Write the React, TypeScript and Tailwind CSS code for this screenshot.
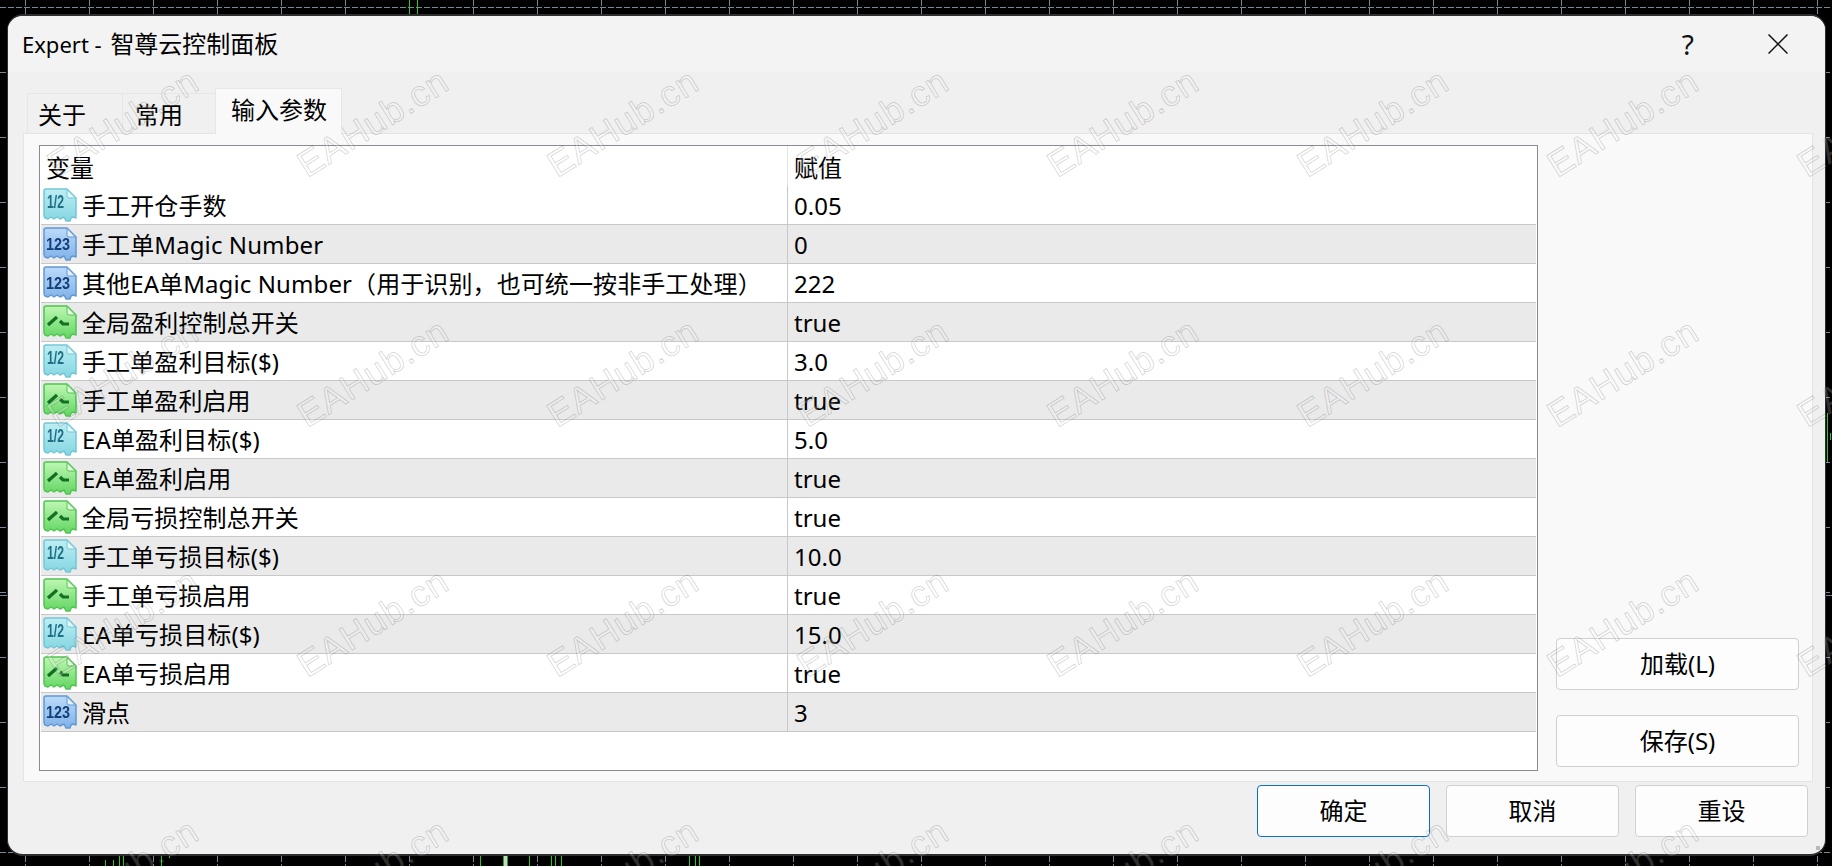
import React from "react";

type Kind = "frac" | "int" | "bool";
const rows: { kind: Kind; name: string; value: string }[] = [
  { kind: "frac", name: "手工开仓手数", value: "0.05" },
  { kind: "int", name: "手工单Magic Number", value: "0" },
  { kind: "int", name: "其他EA单Magic Number（用于识别，也可统一按非手工处理）", value: "222" },
  { kind: "bool", name: "全局盈利控制总开关", value: "true" },
  { kind: "frac", name: "手工单盈利目标($)", value: "3.0" },
  { kind: "bool", name: "手工单盈利启用", value: "true" },
  { kind: "frac", name: "EA单盈利目标($)", value: "5.0" },
  { kind: "bool", name: "EA单盈利启用", value: "true" },
  { kind: "bool", name: "全局亏损控制总开关", value: "true" },
  { kind: "frac", name: "手工单亏损目标($)", value: "10.0" },
  { kind: "bool", name: "手工单亏损启用", value: "true" },
  { kind: "frac", name: "EA单亏损目标($)", value: "15.0" },
  { kind: "bool", name: "EA单亏损启用", value: "true" },
  { kind: "int", name: "滑点", value: "3" },
];

const palette = {
  frac: { top: "#bdeef3", bottom: "#84d6e2", edge: "#74c6d6", ear: "#e4f8fa", ink: "#1f6f88" },
  int: { top: "#bcdafa", bottom: "#7fb2e8", edge: "#6198d4", ear: "#e4f0fc", ink: "#123f78" },
  bool: { top: "#bff7b4", bottom: "#62d662", edge: "#52c452", ear: "#e4fce0", ink: "#136f22" },
};

function ParamIcon({ kind }: { kind: Kind }) {
  const c = palette[kind];
  const id = `grad-${kind}`;
  return (
    <svg width="34" height="34" viewBox="0 0 34 34" className="shrink-0 blur-[0.35px]">
      <defs>
        <linearGradient id={id} x1="0" y1="0" x2="0" y2="1">
          <stop offset="0" stopColor={c.top} />
          <stop offset="1" stopColor={c.bottom} />
        </linearGradient>
      </defs>
      <path
        d="M3 1H24L33 10V30L30 29L28 30L27 33L23 33L21 29L17 31L14 29L11 31L8 29L5 31L2 30Q1 29 1 27V3Q1 1 3 1Z"
        fill={`url(#${id})`}
        stroke={c.edge}
        strokeWidth="1.5"
        strokeLinejoin="round"
      />
      <path d="M24 1.5L32.5 10H26Q24 10 24 8Z" fill={c.ear} stroke={c.edge} strokeWidth="1" />
      {kind === "frac" && (
        <text x="4" y="20" fill={c.ink} fontFamily="'Liberation Sans', sans-serif" fontWeight="700" fontSize="18" textLength="17" lengthAdjust="spacingAndGlyphs">
          1/2
        </text>
      )}
      {kind === "int" && (
        <text x="3" y="23" fill={c.ink} fontFamily="'Liberation Sans', sans-serif" fontWeight="700" fontSize="16" textLength="24" lengthAdjust="spacingAndGlyphs">
          123
        </text>
      )}
      {kind === "bool" && (
        <g stroke={c.ink} strokeWidth="3.2" fill="none">
          <path d="M5 20L14 12" />
          <path d="M17 16L20 19H26" />
        </g>
      )}
    </svg>
  );
}

const vLines = Array.from({ length: 29 }, (_, i) => 25.5 + i * 64);
const hLines = Array.from({ length: 14 }, (_, i) => 7.5 + i * 65);
const greenTop = [409.5, 417.5];
const greenBottom = [119.5, 123.5, 161.5, 480.5, 529.5, 551.5, 555.5, 561.5, 689.5, 695.5, 699.5];

function Chart() {
  return (
    <svg width="1832" height="866" className="absolute left-0 top-0">
      {hLines.map((y) => (
        <line key={y} x1="0" x2="1832" y1={y} y2={y} stroke="#778899" strokeDasharray="6 2" />
      ))}
      {vLines.map((x) => (
        <line key={x} x1={x} x2={x} y1="0" y2="866" stroke="#778899" strokeDasharray="6 2" />
      ))}
      <line x1="0" x2="1832" y1="595.5" y2="595.5" stroke="#778899" />
      {greenTop.map((x) => (
        <line key={x} x1={x} x2={x} y1="0" y2="15" stroke="#22cc22" />
      ))}
      {greenBottom.map((x) => (
        <line key={x} x1={x} x2={x} y1="855" y2="866" stroke="#22cc22" />
      ))}
      <rect x="503" y="855" width="5" height="11" fill="#22aa22" />
      <rect x="504" y="855" width="3" height="11" fill="#cfcfcf" />
      <line x1="105.5" x2="105.5" y1="860" y2="866" stroke="#22cc22" />
      <line x1="113.5" x2="113.5" y1="860" y2="866" stroke="#22cc22" />
      <line x1="169.5" x2="169.5" y1="855" y2="858" stroke="#22cc22" />
      <line x1="425.5" x2="425.5" y1="14" y2="15" stroke="#22cc22" />
      <line x1="1827.5" x2="1827.5" y1="413" y2="462" stroke="#22cc22" />
      <line x1="1830.5" x2="1830.5" y1="433" y2="440" stroke="#22cc22" />
    </svg>
  );
}

const wmX = Array.from({ length: 8 }, (_, i) => 123 + i * 250);
const wmY = Array.from({ length: 4 }, (_, i) => 123 + i * 250);

function Watermarks() {
  return (
    <>
      {wmY.map((y) =>
        wmX.map((x) => (
          <span
            key={`${x}-${y}`}
            style={{ left: x, top: y }}
            className="pointer-events-none absolute -translate-x-1/2 -translate-y-1/2 rotate-[-32deg] whitespace-nowrap font-['Liberation_Sans',sans-serif] text-[36px] leading-none tracking-[1px] text-[rgba(255,255,255,0.2)] [-webkit-text-stroke:1px_rgba(0,0,0,0.16)]"
          >
            EAHub.cn
          </span>
        ))
      )}
    </>
  );
}

function Btn({ label, className }: { label: string; className: string }) {
  return (
    <button className={`flex h-[52px] items-center justify-center rounded-[4px] border bg-[#fdfdfd] text-[24px] text-black ${className}`}>
      {label}
    </button>
  );
}

export default function App() {
  return (
    <div className="relative h-[866px] w-[1832px] overflow-hidden bg-black pl-[7px] pt-[14px] font-['Noto_Sans','Noto_Sans_CJK_SC',sans-serif] text-[24px] text-black">
      <Chart />
      <div className="relative flex h-[842px] w-[1819px] flex-col overflow-hidden rounded-[16px] border-x border-y-2 border-[#2e2e2e] bg-[#f0f0f0]">
        {/* title bar */}
        <div className="flex h-[56px] shrink-0 items-center bg-[#f3f3f3] pl-[14px] pr-[37px]">
          <span className="flex flex-1 items-center leading-none">
            <span className="mr-[3px] whitespace-pre text-[22px]">Expert - </span>
            智尊云控制面板
          </span>
          <span className="mr-[74px] text-[28px] leading-none text-[#111]">?</span>
          <svg width="20" height="20" viewBox="0 0 20 20">
            <path d="M0.5 0.5L19.5 19.5M19.5 0.5L0.5 19.5" stroke="#111" strokeWidth="1.5" />
          </svg>
        </div>

        {/* tabs */}
        <div className="flex h-[61px] shrink-0 items-end pl-[19px]">
          <div className="flex h-[40px] w-[95px] items-center border-l border-t border-[#e6e6e6] pl-[10px] pt-[2px] leading-none">关于</div>
          <div className="flex h-[40px] w-[93px] items-center border-l border-t border-[#e6e6e6] pl-[12px] pt-[2px] leading-none">常用</div>
          <div className="relative z-10 -mb-px flex h-[46px] w-[127px] items-center border-x border-t border-[#e6e6e6] bg-[#f9f9f9] pb-[3px] pl-[15px] leading-none">输入参数</div>
        </div>

        {/* panel */}
        <div className="ml-[15px] flex h-[649px] w-[1790px] shrink-0 border border-[#e4e4e4] bg-[#f9f9f9] pl-[15px] pt-[11px]">
          <div className="flex h-[626px] w-[1499px] shrink-0 flex-col border border-[#8a8a92] bg-white px-px">
            <div className="flex h-[40px] shrink-0 items-center">
              <div className="h-full w-[746px] pl-[5px] leading-[44px]">变量</div>
              <div className="h-full flex-1 border-l border-[#e4e4e4] pl-[6px] leading-[44px]">赋值</div>
            </div>
            {rows.map((r, i) => (
              <div key={i} className={`flex h-[39px] shrink-0 border-b border-[#c8c8c8] ${i % 2 === 1 ? "bg-[#eaeaea]" : "bg-white"}`}>
                <div className="flex w-[746px] items-center gap-[5px] pl-[2px]">
                  <ParamIcon kind={r.kind} />
                  <span className="whitespace-nowrap pt-[2px] leading-none tracking-[0.1px]">{r.name}</span>
                </div>
                <div className="flex flex-1 items-center border-l border-[#c8c8c8] pl-[6px] pt-[1px] leading-none">{r.value}</div>
              </div>
            ))}
          </div>
          <div className="ml-[18px] flex h-[622px] w-[243px] flex-col justify-end gap-[25px]">
            <Btn label="加载(L)" className="w-full border-[#d0d0d0]" />
            <Btn label="保存(S)" className="w-full border-[#d0d0d0]" />
          </div>
        </div>

        {/* footer */}
        <div className="flex justify-end gap-[16px] pr-[17px] pt-[3px]">
          <Btn label="确定" className="w-[173px] border-[#0a6fc9]" />
          <Btn label="取消" className="w-[173px] border-[#d0d0d0]" />
          <Btn label="重设" className="w-[173px] border-[#d0d0d0]" />
        </div>
        <span className="absolute bottom-[4px] right-[5px] h-[4px] w-[4px] bg-[#b8b8b8]" />
      </div>
      <Watermarks />
    </div>
  );
}
